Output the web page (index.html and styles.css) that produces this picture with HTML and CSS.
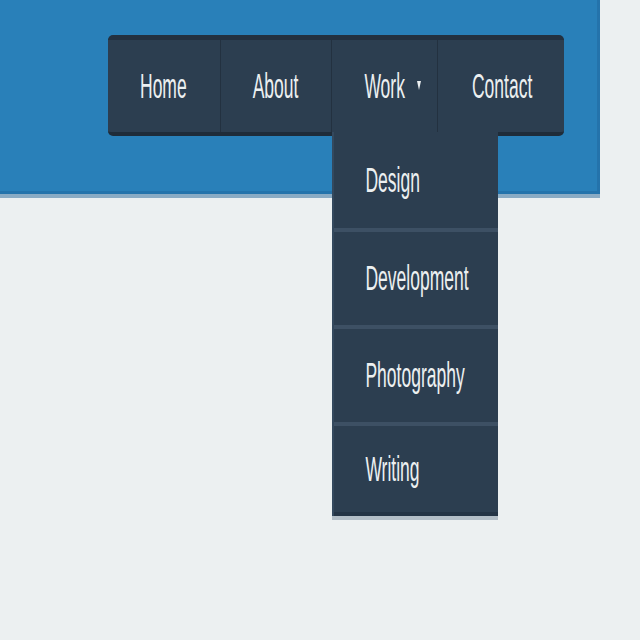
FILE: index.html
```html
<!DOCTYPE html>
<html lang="en">
<head>
<meta charset="utf-8">
<title>Menu</title>
<link rel="stylesheet" href="styles.css">
</head>
<body>
<header class="header">
  <nav class="nav">
    <ul class="menu">
      <li class="item"><a class="link" href="#"><span class="lbl">Home</span></a></li>
      <li class="item"><a class="link" href="#"><span class="lbl">About</span></a></li>
      <li class="item item-drop"><a class="link link-drop" href="#"><span class="lbl">Work</span><span class="caret"></span></a>
        <ul class="dropdown">
          <li class="sub"><a class="sublink" href="#"><span class="lbl">Design</span></a></li>
          <li class="sub"><a class="sublink" href="#"><span class="lbl">Development</span></a></li>
          <li class="sub"><a class="sublink" href="#"><span class="lbl">Photography</span></a></li>
          <li class="sub sub-last"><a class="sublink" href="#"><span class="lbl">Writing</span></a></li>
        </ul>
      </li>
      <li class="item"><a class="link link-last" href="#"><span class="lbl">Contact</span></a></li>
    </ul>
  </nav>
</header>
</body>
</html>
```

FILE: styles.css
```css
html, body {
  margin: 0;
  padding: 0;
}
body {
  background: #ecf0f1;
  font-family: "Liberation Sans", Arial, sans-serif;
  font-size: 17.5px;
  color: #ecf0f1;
  width: 640px;
  height: 640px;
  overflow: hidden;
}
.header {
  height: 156px;
  padding: 35px 0 0 108px;
  box-sizing: content-box;
  width: 489px;
  background: #2980b9;
  border-right: 3px solid #2473ab;
  border-bottom: 3px solid #2473ab;
  box-shadow: 0 4px 0 #8aabc4;
}
.nav {
  display: inline-block;
  background: #2c3e50;
  border-top: 5px solid #233140;
  border-bottom: 4px solid #1f2c39;
  border-radius: 5px;
}
.menu {
  list-style: none;
  margin: 0;
  padding: 0;
  display: flex;
}
.item {
  position: relative;
  border-left: 1px solid #233140;
}
.item:first-child {
  border-left: 0;
}
.link {
  display: flex;
  align-items: center;
  height: 92px;
  padding: 0 33px 0 32px;
  color: #ecf0f1;
  text-decoration: none;
}
.link-drop {
  padding-right: 16px;
}
.link-last {
  padding-left: 34px;
  padding-right: 32px;
}
.lbl {
  display: inline-block;
  transform: scaleY(2);
  white-space: nowrap;
}
.caret {
  display: inline-block;
  width: 0;
  height: 0;
  margin-left: 12px;
  margin-top: -2px;
  border-left: 2.5px solid transparent;
  border-right: 2.5px solid transparent;
  border-top: 9px solid #ecf0f1;
}
.dropdown {
  position: absolute;
  left: 0;
  top: 92px;
  width: 166px;
  margin: 0;
  padding: 0;
  list-style: none;
  background: #2c3e50;
  border-left: 2px solid #34495e;
  box-sizing: border-box;
  box-shadow: 0 4px 0 #b3bec7;
  z-index: 2;
}
.sub {
  border-top: 4px solid #3d5064;
}
.sub:first-child {
  border-top: 0;
}
.sublink {
  display: flex;
  align-items: center;
  height: 93px;
  padding-left: 31px;
  color: #ecf0f1;
  text-decoration: none;
}
.sub:first-child .sublink {
  height: 96px;
}
.sub-last {
  border-bottom: 4px solid #243445;
}
.sub-last .sublink {
  height: 86px;
}
```
